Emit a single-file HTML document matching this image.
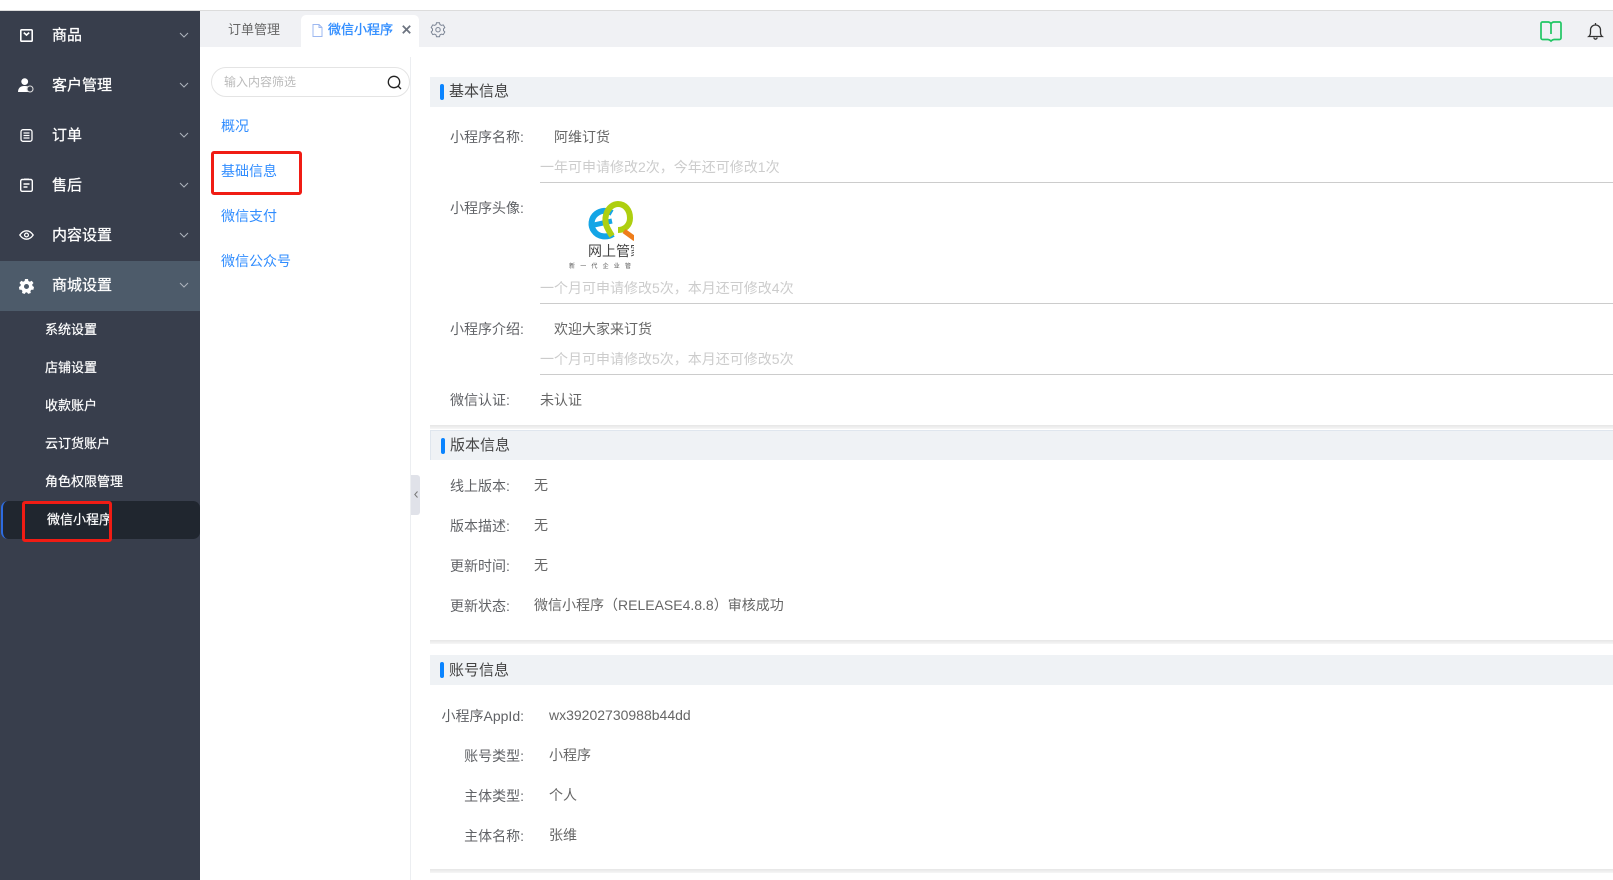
<!DOCTYPE html>
<html lang="zh"><head><meta charset="utf-8"><title>微信小程序</title>
<style>
html,body{margin:0;padding:0;width:1613px;height:880px;overflow:hidden;background:#fff;font-family:"Liberation Sans","Noto Sans CJK SC",sans-serif;}
.t{position:absolute;line-height:20px;white-space:nowrap;font-size:14px;color:#666;}
.a{position:absolute;}
.m{color:#fff;font-size:15px;left:52px;-webkit-text-stroke:.25px #fff;}
.s{color:#fff;font-size:13px;left:45px;-webkit-text-stroke:.2px #fff;}
.n{color:#2f8cff;font-size:14px;left:221px;}
.l{color:#606266;}
.v{color:#666;}
.h{color:#444;font-size:15px;}
.note{color:#ccc;left:540px;}
.line{position:absolute;left:540px;width:1073px;height:1px;background:#ccc;}
.sec{position:absolute;left:430px;width:1183px;height:30px;background:#eff2f5;}
.bar{position:absolute;width:4px;height:16px;background:#0a84ff;border-radius:2px;}
.div{position:absolute;left:430px;width:1183px;height:4px;background:linear-gradient(#e6e6e6,#f6f6f6);}
.chev{position:absolute;left:180px;width:8px;height:8px;}
svg{position:absolute;overflow:visible;}
</style></head><body>
<div class="a" style="left:0;top:10px;width:1613px;height:1px;background:#dcdcdc"></div>

<!-- sidebar -->
<div class="a" style="left:0;top:11px;width:200px;height:869px;background:#383e4c"></div>
<div class="a" style="left:0;top:261px;width:200px;height:50px;background:#4d5b6a"></div>
<div class="a" style="left:1px;top:501px;width:199px;height:38px;background:#20262f;border-radius:7px;box-sizing:border-box;border-left:2px solid #2d6be0"></div>

<svg style="left:20px;top:29px" width="13" height="13" viewBox="0 0 13 13" fill="none" stroke="#fff" stroke-width="1.6"><rect x=".8" y=".8" width="11.4" height="11.4" rx="1"/><path d="M3.800 3.600 6.500 6 9.200 3.600"/></svg>
<svg style="left:18px;top:78px" width="16" height="15" viewBox="0 0 16 15"><circle cx="6.700" cy="3.600" r="3.400" fill="#fff"/><path d="M0 14c0-4 2.500-6 6-6s4 .5 4 .5v5.500z" fill="#fff"/><circle cx="12" cy="11" r="3" fill="#383e4c" stroke="#ddd" stroke-width="1.100"/></svg>
<svg style="left:20px;top:129px" width="13" height="13" viewBox="0 0 13 13" fill="none" stroke="#fff" stroke-width="1.300"><rect x="1" y=".7" width="11" height="11.600" rx="2"/><path d="M3.500 4h6M3.500 6.500h6M3.500 9h6"/></svg>
<svg style="left:20px;top:178px" width="13" height="14" viewBox="0 0 13 14" fill="none" stroke="#fff" stroke-width="1.400"><rect x=".7" y="1.500" width="11.600" height="11.800" rx="1.500"/><path d="M4 1.200h5M3.500 6h6M3.500 9h4"/></svg>
<svg style="left:19px;top:230px" width="15" height="10" viewBox="0 0 15 10" fill="none" stroke="#fff" stroke-width="1.300"><path d="M.8 5C3 1.800 5 .8 7.500.8S12 1.800 14.200 5C12 8.200 10 9.200 7.500 9.200S3 8.200.8 5z"/><circle cx="7.500" cy="5" r="1.900"/></svg>
<svg style="left:19px;top:279px" width="15" height="15" viewBox="0 0 15 15"><path fill="#fff" fill-rule="evenodd" d="M6 0h3l.4 2 1.500.7L12.700 1.700 14.500 4l-1.300 1.500.3 1.500L15 8l-.6 2.700-2 .1-1 1.200.4 2-2.600.9L8 13.400H6.800L5.600 15 3 14l.4-2-1-1.200-2 0L-.1 8l1.600-1 .3-1.500L.5 4l1.800-2.300 1.800 1L5.600 2zM7.500 5a2.500 2.500 0 1 0 0 5 2.500 2.500 0 0 0 0-5z"/></svg>

<div class="t m" style="top:26px">商品</div>
<div class="t m" style="top:76px">客户管理</div>
<div class="t m" style="top:126px">订单</div>
<div class="t m" style="top:176px">售后</div>
<div class="t m" style="top:226px">内容设置</div>
<div class="t m" style="top:276px">商城设置</div>
<svg class="chev" style="top:31px" viewBox="0 0 8 8" fill="none" stroke="#aeb4bd" stroke-width="1"><path d="M0 2 4 6 8 2"/></svg>
<svg class="chev" style="top:81px" viewBox="0 0 8 8" fill="none" stroke="#aeb4bd" stroke-width="1"><path d="M0 2 4 6 8 2"/></svg>
<svg class="chev" style="top:131px" viewBox="0 0 8 8" fill="none" stroke="#aeb4bd" stroke-width="1"><path d="M0 2 4 6 8 2"/></svg>
<svg class="chev" style="top:181px" viewBox="0 0 8 8" fill="none" stroke="#aeb4bd" stroke-width="1"><path d="M0 2 4 6 8 2"/></svg>
<svg class="chev" style="top:231px" viewBox="0 0 8 8" fill="none" stroke="#aeb4bd" stroke-width="1"><path d="M0 2 4 6 8 2"/></svg>
<svg class="chev" style="top:281px" viewBox="0 0 8 8" fill="none" stroke="#aeb4bd" stroke-width="1"><path d="M0 2 4 6 8 2"/></svg>

<div class="t s" style="top:320px">系统设置</div>
<div class="t s" style="top:358px">店铺设置</div>
<div class="t s" style="top:396px">收款账户</div>
<div class="t s" style="top:434px">云订货账户</div>
<div class="t s" style="top:472px">角色权限管理</div>
<div class="t s" style="top:510px;left:47px">微信小程序</div>
<div class="a" style="left:22px;top:501px;width:90px;height:41px;box-sizing:border-box;border:3px solid #f01c14;border-radius:3px"></div>

<!-- tab bar -->
<div class="a" style="left:200px;top:11px;width:1413px;height:36px;background:#f0f1f4"></div>
<div class="a" style="left:301px;top:15px;width:118px;height:32px;background:#fff;border-radius:5px 5px 0 0"></div>
<div class="t" style="left:228px;top:20px;font-size:13px;color:#666">订单管理</div>
<svg style="left:312px;top:24px" width="11" height="13" viewBox="0 0 11 13" fill="none" stroke="#9db8f0" stroke-width="1"><path d="M1 .5h6l3 3v9H1zM7 .5v3h3"/></svg>
<div class="t" style="left:328px;top:20px;font-size:13px;color:#2f8cff;-webkit-text-stroke:.3px #2f8cff">微信小程序</div>
<svg style="left:402px;top:25px" width="9" height="9" viewBox="0 0 9 9" fill="none" stroke="#6d7480" stroke-width="1.800"><path d="M.8.8l7.400 7.400M8.200.8.8 8.200"/></svg>
<svg style="left:431px;top:22px" width="14" height="15" viewBox="0 0 14 15" fill="none" stroke="#7b8494" stroke-width="1"><path d="M5.500 .8h3l.5 1.800 1.500.8 1.800-.5 1.500 2.600-1.300 1.400v1.700l1.300 1.400-1.500 2.600-1.800-.5-1.500.8-.5 1.800h-3L5 12.900l-1.500-.8-1.800.5L.2 10l1.300-1.400V6.900L.2 5.500l1.500-2.600 1.800.5L5 2.600z"/><circle cx="7" cy="7.700" r="2.200"/></svg>
<svg style="left:1540px;top:21px" width="22" height="21" viewBox="0 0 22 21" fill="none" stroke="#1fc663" stroke-width="1.700"><path d="M2.500 1h6c1 0 1.500.5 2.500 1.500C12 1.500 12.500 1 13.500 1h6c.8 0 1.500.7 1.500 1.500V17c0 .8-.7 1.500-1.500 1.500H14c-1 0-2 .5-3 1.500-1-1-2-1.500-3-1.500H2.500C1.700 18.500 1 17.800 1 17V2.500C1 1.700 1.700 1 2.500 1zM11 3v10"/></svg>
<svg style="left:1588px;top:23px" width="15" height="17" viewBox="0 0 15 17" fill="none" stroke="#333" stroke-width="1.300"><path d="M.8 13.500c1.200-1 1.700-2 1.700-4V7c0-3 2.200-5 5-5s5 2 5 5v2.500c0 2 .5 3 1.700 4zM7.500 0v2M5.800 14.500c.3 1.200 1 1.700 1.700 1.700s1.400-.5 1.700-1.700"/></svg>

<!-- secondary panel -->
<div class="a" style="left:410px;top:57px;width:1px;height:823px;background:#eceef1"></div>
<div class="a" style="left:211px;top:67px;width:199px;height:30px;box-sizing:border-box;border:1px solid #e4e4e4;border-radius:15px"></div>
<div class="t" style="left:224px;top:72px;font-size:12px;color:#bbb">输入内容筛选</div>
<svg style="left:387px;top:75px" width="15" height="15" viewBox="0 0 15 15" fill="none" stroke="#222" stroke-width="1.300"><circle cx="7" cy="7" r="5.700"/><path d="M11 11l3 3"/></svg>
<div class="t n" style="top:116px">概况</div>
<div class="t n" style="top:161px">基础信息</div>
<div class="t n" style="top:206px">微信支付</div>
<div class="t n" style="top:251px">微信公众号</div>
<div class="a" style="left:211px;top:151px;width:91px;height:44px;box-sizing:border-box;border:3px solid #f01c14;border-radius:3px"></div>
<div class="a" style="left:411px;top:475px;width:9px;height:40px;background:#e0e2e9;border-radius:0 3px 3px 0"></div>
<svg style="left:414px;top:491px" width="4" height="7" viewBox="0 0 4 7" fill="none" stroke="#777" stroke-width="1"><path d="M3.500 .5.800 3.500l2.700 3"/></svg>

<!-- section 1 -->
<div class="sec" style="top:77px"></div><div class="bar" style="left:440px;top:84px"></div>
<div class="t h" style="left:449px;top:82px">基本信息</div>
<div class="t l" style="left:450px;top:127px">小程序名称:</div>
<div class="t v" style="left:554px;top:127px">阿维订货</div>
<div class="t note" style="top:157px">一年可申请修改2次，今年还可修改1次</div>
<div class="line" style="top:182px"></div>
<div class="t l" style="left:450px;top:198px">小程序头像:</div>

<!-- logo -->
<svg style="left:565px;top:198px;overflow:hidden" width="69" height="74" viewBox="0 0 69 74">
<path d="M47 15C42 12 36 12 31 16C26 20 25 28 29 33C33 39 42 40 48 36" fill="none" stroke="#14a5e6" stroke-width="6"/>
<path d="M29 27 47 23" stroke="#14a5e6" stroke-width="5"/>
<path d="M47 38C42 30 39 25 41 17C43 9 49 6 53 6C60 6 65 12 65 20C65 27 60 32 53 32" fill="none" stroke="#aecf10" stroke-width="6"/>
<path d="M59 33 70 41" stroke="#ee7d1b" stroke-width="5"/>
<text x="23" y="58" font-size="14" fill="#444" font-family="'Noto Sans CJK SC',sans-serif">网上管家</text>
<text x="4" y="70" font-size="6" fill="#555" letter-spacing="5.200" font-family="'Noto Sans CJK SC',sans-serif">新一代企业管</text>
</svg>

<div class="t note" style="top:278px">一个月可申请修改5次，本月还可修改4次</div>
<div class="line" style="top:303px"></div>
<div class="t l" style="left:450px;top:319px">小程序介绍:</div>
<div class="t v" style="left:554px;top:319px">欢迎大家来订货</div>
<div class="t note" style="top:349px">一个月可申请修改5次，本月还可修改5次</div>
<div class="line" style="top:374px"></div>
<div class="t l" style="left:450px;top:390px">微信认证:</div>
<div class="t v" style="left:540px;top:390px">未认证</div>
<div class="div" style="top:425px"></div>

<!-- section 2 -->
<div class="sec" style="top:430px;box-sizing:border-box;border-top:1px solid #dfe6ee;border-left:1px solid #dfe6ee"></div><div class="bar" style="left:441px;top:438px"></div>
<div class="t h" style="left:450px;top:436px">版本信息</div>
<div class="t l" style="left:450px;top:476px">线上版本:</div><div class="t v" style="left:534px;top:475px">无</div>
<div class="t l" style="left:450px;top:516px">版本描述:</div><div class="t v" style="left:534px;top:515px">无</div>
<div class="t l" style="left:450px;top:556px">更新时间:</div><div class="t v" style="left:534px;top:555px">无</div>
<div class="t l" style="left:450px;top:596px">更新状态:</div><div class="t v" style="left:534px;top:595px">微信小程序（RELEASE4.8.8）审核成功</div>
<div class="div" style="top:640px"></div>

<!-- section 3 -->
<div class="sec" style="top:655px"></div><div class="bar" style="left:440px;top:662px"></div>
<div class="t h" style="left:449px;top:661px">账号信息</div>
<div class="t l" style="right:1089px;top:706px">小程序AppId:</div><div class="t v" style="left:549px;top:705px">wx39202730988b44dd</div>
<div class="t l" style="right:1089px;top:746px">账号类型:</div><div class="t v" style="left:549px;top:745px">小程序</div>
<div class="t l" style="right:1089px;top:786px">主体类型:</div><div class="t v" style="left:549px;top:785px">个人</div>
<div class="t l" style="right:1089px;top:826px">主体名称:</div><div class="t v" style="left:549px;top:825px">张维</div>
<div class="div" style="top:869px"></div>
</body></html>
